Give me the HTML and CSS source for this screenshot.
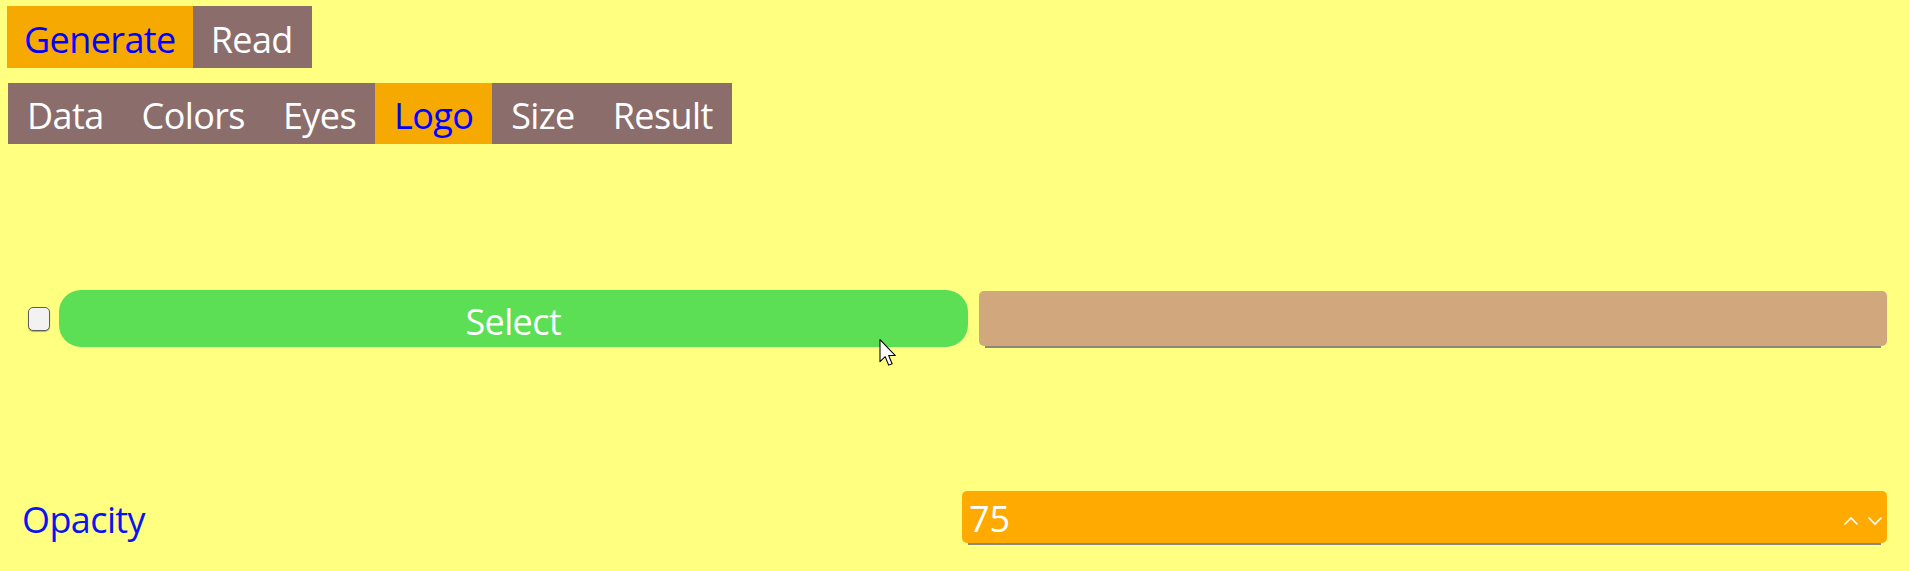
FILE: index.html
```html
<!DOCTYPE html>
<html lang="en">
<head>
<meta charset="utf-8">
<title>QR Generator – Logo</title>
<link rel="stylesheet" href="styles.css">
</head>
<body>
<div class="app">
  <nav class="tabs modes">
    <span class="tab active">Generate</span>
    <span class="tab">Read</span>
  </nav>
  <nav class="tabs steps">
    <span class="tab">Data</span>
    <span class="tab">Colors</span>
    <span class="tab">Eyes</span>
    <span class="tab active">Logo</span>
    <span class="tab">Size</span>
    <span class="tab">Result</span>
  </nav>
  <section class="pane">
    <div class="file-row">
      <input type="checkbox" class="check">
      <button class="select-btn" type="button">Select</button>
      <div class="field file-field"><input class="file-name" type="text" readonly></div>
    </div>
    <div class="opacity-row">
      <label class="opacity-label">Opacity</label>
      <div class="field number-field">
        <input class="number-input" type="text" value="75">
        <span class="spin">
          <svg class="chev" viewBox="0 0 16 10" width="16" height="10"><path d="M1.5 8.5 L8 2 L14.5 8.5" fill="none" stroke="#fff" stroke-width="1.6"/></svg>
          <svg class="chev" viewBox="0 0 16 10" width="16" height="10"><path d="M1.5 1.5 L8 8 L14.5 1.5" fill="none" stroke="#fff" stroke-width="1.6"/></svg>
        </span>
      </div>
    </div>
  </section>
  <svg class="cursor" viewBox="0 0 13 21" width="18" height="28"><path d="M0.5 0.5 L0.5 17 L4.4 13.3 L7 19.6 L9.6 18.5 L7 12.4 L12 12.4 Z" fill="#fff" stroke="#000" stroke-width="0.8" stroke-linejoin="round"/></svg>
</div>
</body>
</html>
```

FILE: styles.css
```css
html, body {
  margin: 0;
  padding: 0;
  background: #ffff80;
}

body {
  font-family: "Open Sans", "Noto Sans", sans-serif;
  font-size: 36px;
}

.app {
  position: relative;
  width: 1909px;
  height: 571px;
  overflow: hidden;
}

.tabs {
  display: flex;
}

.modes {
  margin: 6px 0 0 7px;
}

.steps {
  margin: 15px 0 0 8px;
}

.tab {
  display: block;
  box-sizing: border-box;
  height: 62px;
  padding: 5px 17px 0;
  line-height: 57px;
  background: #8b6d6c;
  color: #ffffff;
  letter-spacing: -0.6px;
}

.modes .tab + .tab {
  padding: 5px 19px 0 18px;
}

.steps .tab {
  height: 61px;
  padding: 5px 19px 0;
  line-height: 56px;
}

.tab.active {
  background: #f6a900;
  color: #0000ff;
}

.pane {
  padding: 0 22px 0 22px;
}

.file-row {
  display: flex;
  align-items: center;
  margin-top: 146px;
}

.check {
  appearance: none;
  -webkit-appearance: none;
  box-sizing: border-box;
  width: 22px;
  height: 24px;
  margin: 0 9px 0 6px;
  border: 1.5px solid #5e5e5e;
  border-radius: 5px;
  background: #f2f2f2;
  box-shadow: 0 1px 1px rgba(90, 90, 0, 0.45);
}

.select-btn {
  flex: 1;
  box-sizing: border-box;
  height: 57px;
  border: none;
  border-radius: 22px;
  background: #5cde55;
  color: #ffffff;
  font: inherit;
  letter-spacing: -0.6px;
  padding: 5px 0 0;
}

.field {
  box-sizing: border-box;
  border-radius: 5px;
  box-shadow: 0 8px 0 -6px #8a8a7a;
}

.file-field {
  flex: 1;
  margin-left: 11px;
  height: 55px;
  background: #d1a77e;
}

.file-name {
  width: 100%;
  height: 100%;
  box-sizing: border-box;
  border: none;
  background: transparent;
  outline: none;
  font: inherit;
}

.opacity-row {
  display: flex;
  align-items: center;
  margin-top: 142px;
}

.opacity-label {
  flex: 1;
  color: #0a14f0;
  margin-top: 6px;
  letter-spacing: -0.6px;
}

.number-field {
  width: 925px;
  height: 52px;
  background: #ffaa00;
  display: flex;
  align-items: center;
}

.number-input {
  flex: 1;
  min-width: 0;
  height: 100%;
  box-sizing: border-box;
  border: none;
  background: transparent;
  outline: none;
  color: #ffffff;
  font: inherit;
  padding: 0 0 0 7px;
  margin-top: 4px;
}

.spin {
  display: flex;
  gap: 8px;
  padding-right: 4px;
  margin-top: 8px;
}

.chev {
  display: block;
}

.cursor {
  position: absolute;
  left: 879px;
  top: 339px;
}
```
